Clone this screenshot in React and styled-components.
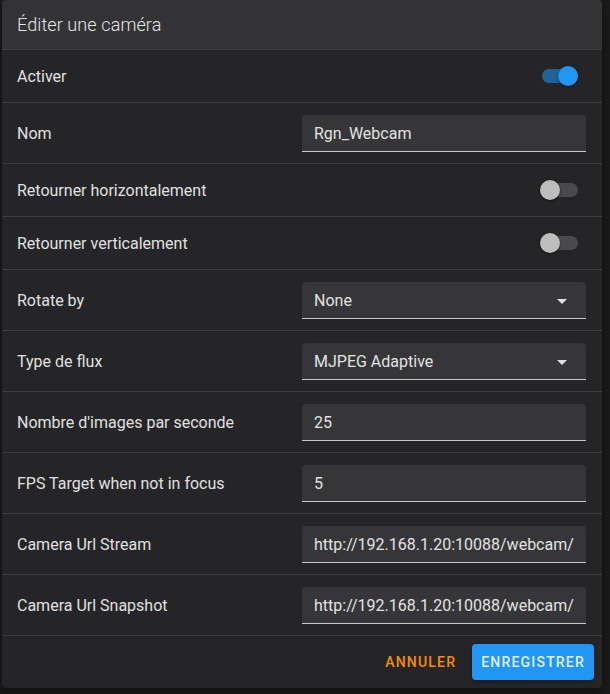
import React from 'react';
import styled, { createGlobalStyle } from 'styled-components';

const GlobalStyle = createGlobalStyle`
  html, body {
    margin: 0;
    padding: 0;
    background: #1b1b1c;
    font-family: Roboto, "Liberation Sans", sans-serif;
  }
`;

const Page = styled.div`
  width: 610px;
  height: 694px;
  overflow: hidden;
  padding-left: 2px;
  box-sizing: border-box;
`;

const Dialog = styled.div`
  width: 600px;
  height: 688px;
  background: #252527;
  border-radius: 4px;
  overflow: hidden;
  box-shadow: 0 4px 12px rgba(0, 0, 0, 0.5);
  display: flex;
  flex-direction: column;
`;

const Header = styled.div`
  height: 49px;
  background: #333336;
  border-bottom: 1px solid #3e3e41;
  display: flex;
  align-items: center;
  padding: 0 15px;
  font-size: 18px;
  font-weight: 300;
  color: #e6e6e6;
  letter-spacing: 0.1px;
`;

const Row = styled.div`
  height: ${(p) => p.h}px;
  border-bottom: 1px solid #3e3e41;
  display: flex;
  align-items: center;
  justify-content: space-between;
  padding: 0 16px 0 15px;
  box-sizing: border-box;
`;

const Label = styled.div`
  font-size: 16px;
  font-weight: 400;
  color: #e0e0e0;
`;

const Field = styled.div`
  width: 284px;
  height: 37px;
  background: #363638;
  border-radius: 4px 4px 0 0;
  border-bottom: 1px solid #c8c8c8;
  box-sizing: border-box;
  display: flex;
  align-items: center;
  padding: 0 12px;
  position: relative;
  margin-top: 1px;
`;

const Value = styled.span`
  display: block;
  width: ${(p) => (p.select ? '230px' : '100%')};
  overflow: hidden;
  white-space: nowrap;
  font-size: 16px;
  color: #e2e2e2;
`;

const Arrow = styled.span`
  position: absolute;
  right: 19px;
  top: 17px;
  width: 0;
  height: 0;
  border-left: 5px solid transparent;
  border-right: 5px solid transparent;
  border-top: 5px solid #e0e0e0;
`;

const Track = styled.div`
  width: 36px;
  height: 14px;
  border-radius: 7px;
  background: ${(p) => (p.on ? 'rgba(33, 150, 243, 0.55)' : '#4a4a4c')};
  position: relative;
  margin-right: 8px;
`;

const Knob = styled.div`
  position: absolute;
  top: -3px;
  left: ${(p) => (p.on ? '16px' : '-2px')};
  width: 20px;
  height: 20px;
  border-radius: 50%;
  background: ${(p) => (p.on ? '#2196f3' : '#bdbdbd')};
  box-shadow: 0 1px 3px rgba(0, 0, 0, 0.5);
`;

const Footer = styled.div`
  flex: 1;
  display: flex;
  align-items: center;
  justify-content: flex-end;
  gap: 8px;
  padding: 0 8px 0 0;
`;

const TextButton = styled.button`
  background: none;
  border: none;
  font-family: inherit;
  font-size: 14px;
  font-weight: 500;
  letter-spacing: 1.2px;
  color: #fb8c00;
  padding: 0 8px;
  height: 36px;
`;

const PrimaryButton = styled.button`
  background: #2196f3;
  border: none;
  border-radius: 4px;
  font-family: inherit;
  font-size: 14px;
  font-weight: 500;
  letter-spacing: 1.2px;
  color: #e3f0fb;
  height: 36px;
  padding: 0 9px;
  box-shadow: 0 2px 4px rgba(0, 0, 0, 0.3);
`;

const Switch = ({ on }) => (
  <Track on={on}>
    <Knob on={on} />
  </Track>
);

const rows = [
  { label: 'Activer', h: 53, toggle: true, on: true },
  { label: 'Nom', h: 61, value: 'Rgn_Webcam' },
  { label: 'Retourner horizontalement', h: 53, toggle: true },
  { label: 'Retourner verticalement', h: 53, toggle: true },
  { label: 'Rotate by', h: 61, value: 'None', select: true },
  { label: 'Type de flux', h: 61, value: 'MJPEG Adaptive', select: true },
  { label: "Nombre d'images par seconde", h: 61, value: '25' },
  { label: 'FPS Target when not in focus', h: 61, value: '5' },
  { label: 'Camera Url Stream', h: 61, value: 'http://192.168.1.20:10088/webcam/?action=stream' },
  { label: 'Camera Url Snapshot', h: 61, value: 'http://192.168.1.20:10088/webcam/?action=snapshot' },
];

export default function App() {
  return (
    <Page>
      <GlobalStyle />
      <Dialog>
        <Header>Éditer une caméra</Header>
        {rows.map((r) => (
          <Row key={r.label} h={r.h}>
            <Label>{r.label}</Label>
            {r.toggle ? (
              <Switch on={r.on} />
            ) : (
              <Field>
                <Value select={r.select}>{r.value}</Value>
                {r.select && <Arrow />}
              </Field>
            )}
          </Row>
        ))}
        <Footer>
          <TextButton>ANNULER</TextButton>
          <PrimaryButton>ENREGISTRER</PrimaryButton>
        </Footer>
      </Dialog>
    </Page>
  );
}
